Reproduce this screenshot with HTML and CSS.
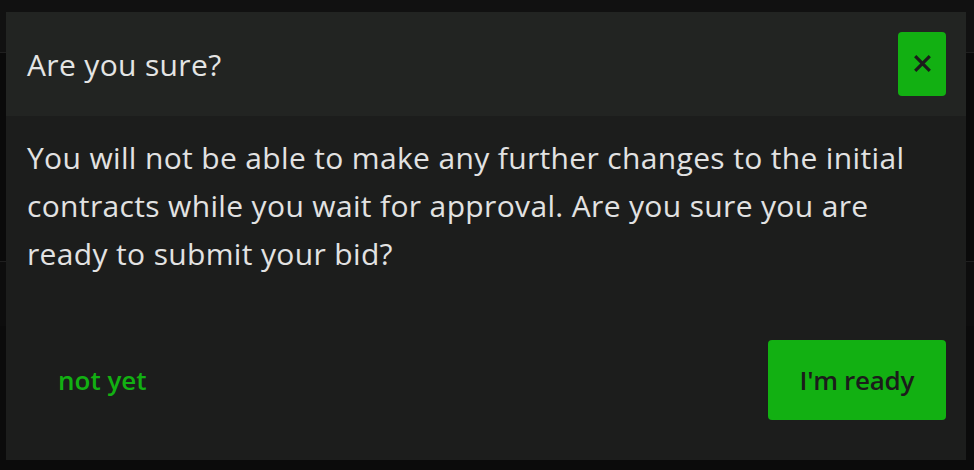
FILE: index.html
```html
<!DOCTYPE html>
<html lang="en">
<head>
<meta charset="utf-8">
<title>Submit bid</title>
<link rel="stylesheet" href="styles.css">
</head>
<body>
  <div class="page">
    <header class="topbar"></header>
    <section class="panel"></section>
    <section class="strip"></section>
  </div>

  <div class="modal" role="dialog" aria-labelledby="modal-title">
    <div class="modal-header">
      <h2 class="modal-title" id="modal-title">Are you sure?</h2>
      <button class="close-btn" type="button" aria-label="Close">
        <svg class="close-icon" width="17" height="17" viewBox="0 0 17 17" aria-hidden="true">
          <path d="M1.2 1.2 L15.8 15.8 M15.8 1.2 L1.2 15.8" stroke="currentColor" stroke-width="3.2" stroke-linecap="butt" fill="none"/>
        </svg>
      </button>
    </div>
    <div class="modal-body">
      <p>You will not be able to make any further changes to the initial contracts while you wait for approval. Are you sure you are ready to submit your bid?</p>
    </div>
    <div class="modal-footer">
      <button class="btn-link" type="button">not yet</button>
      <button class="btn-primary" type="button">I'm ready</button>
    </div>
  </div>
</body>
</html>
```

FILE: styles.css
```css
* {
  box-sizing: border-box;
}

html, body {
  margin: 0;
  padding: 0;
  height: 100%;
}

body {
  background: #0b0b0b;
  font-family: "Open Sans", "Noto Sans", sans-serif;
  color: #e2e2e2;
  overflow: hidden;
  position: relative;
}

/* page behind the dialog */
.page {
  display: flex;
  flex-direction: column;
}

.topbar {
  height: 53px;
  background: #111111;
  border-bottom: 1px solid #1f1f1f;
}

.panel {
  height: 209px;
  background: #0a0a0a;
  border-bottom: 1px solid #1f1f1f;
}

.strip {
  height: 64px;
  background: #0d0d0d;
}

/* dialog */
.modal {
  position: absolute;
  left: 6px;
  top: 12px;
  width: 960px;
  height: 448px;
  background: #1c1d1c;
  display: flex;
  flex-direction: column;
}

.modal-header {
  height: 104px;
  background: #222422;
  display: flex;
  align-items: center;
  justify-content: space-between;
  padding: 0 20px 0 21px;
}

.modal-title {
  margin: 0;
  font-size: 30px;
  font-weight: 400;
  letter-spacing: 0.35px;
  color: #e4e4e4;
}

.close-btn {
  width: 48px;
  height: 64px;
  border: none;
  border-radius: 4px;
  background: #12b012;
  color: #1b1c1b;
  display: flex;
  align-items: center;
  justify-content: center;
  padding: 0 0 1px;
  cursor: pointer;
}

.close-icon {
  display: block;
}

.modal-body {
  padding: 18px 20px 20px 21px;
}

.modal-body p {
  margin: 0;
  font-size: 30px;
  line-height: 48px;
  letter-spacing: 0.35px;
}

.modal-footer {
  margin-top: auto;
  display: flex;
  justify-content: space-between;
  align-items: center;
  padding: 40px 20px;
}

.btn-link,
.btn-primary {
  height: 80px;
  border: none;
  border-radius: 4px;
  font-family: inherit;
  font-size: 26px;
  font-weight: 600;
  padding: 0 32px;
  cursor: pointer;
}

.btn-link {
  background: transparent;
  color: #12b012;
}

.btn-primary {
  background: #12b012;
  color: #1b1c1b;
  letter-spacing: -0.3px;
}
```
